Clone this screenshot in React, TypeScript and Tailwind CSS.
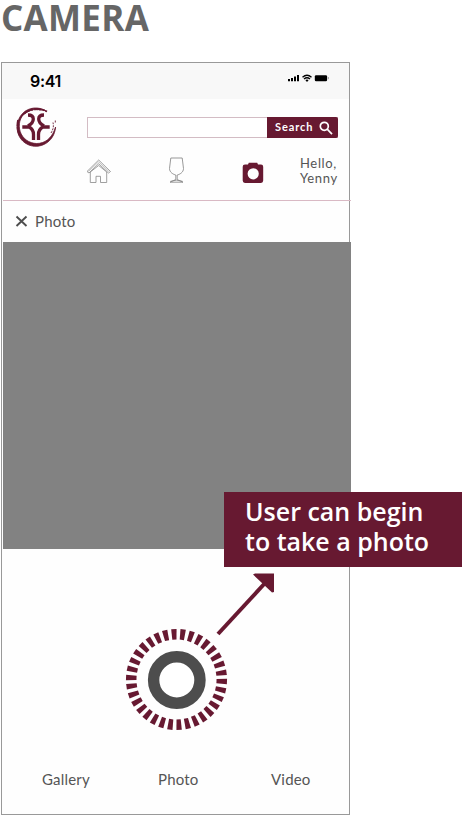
const WINE = '#671931';

function Logo() {
  return (
    <svg className="h-[42px] w-[42px]" viewBox="0 0 42 42" fill="none">
      <path d="M31.500 5.200C24 .2 13.500 1 7.500 7.500C1 14.500 .4 25 5.500 32.500C11 40 21 42.500 29.500 38.200C36 35 40 28.500 40.600 21C37.800 30 32.500 36 24.500 37.300C17 38.500 9.500 34.500 6.200 28C3 21.500 3.800 13.500 8.600 8.600C14.500 2.500 24 2 31.500 5.200Z" fill={WINE} stroke={WINE} strokeWidth=".8" />
      <path d="M9 8C15 2 25 1.500 32 5.500" stroke={WINE} strokeWidth="1.700" strokeDasharray="7 .6 3 .8" />
      <path d="M6 10.500C12 4 21 2.500 27 4.500" stroke={WINE} strokeWidth="1" strokeDasharray="4 .5 2 1" />
      <path d="M36 27C38.500 23 38.800 20 38 16.500M40.300 14.500v3" stroke={WINE} strokeWidth=".9" strokeDasharray="2 1.100" />
      <path d="M3 14C1.800 19 2.500 25 4.500 29" stroke={WINE} strokeWidth="1.700" strokeDasharray="6 .5 3 .5" />
      <path d="M13 9C16.500 9 18.300 10.500 18.300 13C18.300 16 16.500 18 13 20M29 9C25.500 9 23.700 10.500 23.700 13C23.700 16 25.500 18 29 20" stroke={WINE} strokeWidth="3.300" />
      <path d="M7.300 21H14C17 22.500 18.500 25 18.500 28.500V34M34.700 21H28C25 22.500 23.500 25 23.500 28.500V34" stroke={WINE} strokeWidth="3.300" />
    </svg>
  );
}

function StatusIcons() {
  return (
    <svg className="h-[10px] w-[42px]" viewBox="0 0 42 10">
      <path d="M0 6h2v2.300H0zM3 5h2v3.300H3zM6 3.500h2v4.800H6zM9 2h2v6.300H9z" />
      <path d="M14.500 4.200Q19 .4 23.500 4.200M16 6Q19 3.500 22 6" fill="none" stroke="#000" strokeWidth="1.400" />
      <path d="m17.300 7.100 1.700 1.800 1.700-1.800Q19 5.900 17.300 7.100Z" />
      <rect x="26.800" y="2.300" width="12.300" height="6" rx="1.300" />
      <path d="M40.300 4v2.200" stroke="#777" strokeWidth=".7" />
    </svg>
  );
}

function House() {
  return (
    <svg className="h-[25px] w-[26px]" viewBox="0 0 26 25" fill="none" stroke="#888" strokeWidth=".8" strokeLinejoin="round">
      <path d="M0 12.500 11.700 1 23.500 12.500 21.500 14 11.700 4.700 2 14Z" />
      <path d="M3.300 13V23.500H9V17.300H13.500V23.500H19.700V13M3.300 13 11.700 6.500 19.700 13" />
      <path d="m1.500 12.500 10.200-9.700 10.100 9.700" strokeWidth=".5" />
    </svg>
  );
}

function Glass() {
  return (
    <svg className="h-[27px] w-[17px]" viewBox="0 0 17 27" fill="none" stroke="#888" strokeWidth=".85">
      <path d="M2.800 1H14.200L15.500 11.500C15.500 15.500 11.500 17.500 9.200 18V22.500L15 25.200H2L7.800 22.500V18C5.500 17.500 1.500 15.500 1.500 11.500Z" />
      <path d="M2.500 24.300Q8.500 22 14.500 24.300" />
    </svg>
  );
}

function Camera() {
  return (
    <svg className="h-[22px] w-[22px]" viewBox="0 0 22 22">
      <path fillRule="evenodd" fill={WINE} d="M3 2.500H6L6.800 .8H15.200L16 2.500H19Q21.200 2.500 21.200 4.700V18.600Q21.200 21 19 21H3Q.7 21 .7 18.600V4.700Q.7 2.500 3 2.500ZM11.200 6.200A5.600 5.600 0 1 0 11.200 17.400A5.600 5.600 0 1 0 11.200 6.200Z" />
    </svg>
  );
}

function Shutter() {
  const ticks = Array.from({ length: 34 }, (_, i) => i);
  return (
    <svg className="h-[104px] w-[104px]" viewBox="-52.500 -51.500 104 104">
      {ticks.map((i) => (
        <path key={i} d="M-2.700-50.500H2.700L2.100-40H-2.100Z" fill={WINE} transform={`rotate(${-3 + (i * 360) / 34})`} />
      ))}
      <circle cx=".3" cy=".5" r="23.200" fill="#fff" stroke="#4d4d4d" strokeWidth="11.400" />
    </svg>
  );
}

export default function App() {
  return (
    <main className="relative h-[816px] w-[463px] overflow-hidden bg-white font-['Lato',sans-serif] text-[#555]">
      <h1 className="h-[62px] pl-px font-['Open_Sans',sans-serif] text-[35px] leading-[36px] font-bold tracking-[0.3px] text-[#666]">CAMERA</h1>
      <section className="ml-px flex h-[753px] w-[349px] flex-col border border-[#999] bg-[#fefefe]">
        <div className="flex h-[36px] shrink-0 justify-between bg-[#f8f8f8] pr-[19px] pl-[28px]">
          <span className="pt-[8px] font-['Inter',sans-serif] text-[16px] leading-[20px] font-semibold tracking-[-0.3px] text-black">9:41</span>
          <div className="pt-[10px]"><StatusIcons /></div>
        </div>
        <header className="-mr-[2px] ml-px flex h-[102px] shrink-0 border-b border-[#d9b9c4] pl-[12px]">
          <div className="w-[72px] pt-[7px]"><Logo /></div>
          <div className="w-[251px]">
            <div className="mt-[18px] flex h-[21px] border border-[#d3bcc4]">
              <div className="flex-1 bg-white" />
              <button className="-m-px flex w-[71px] items-center rounded-r-[2px] bg-[#671931] pl-[8px] text-[11px] font-bold tracking-[0.9px] text-white">
                Search
                <svg className="ml-[6px] h-[14px] w-[14px]" viewBox="0 0 14 14" fill="none" stroke="white" strokeWidth="1.700">
                  <circle cx="5.300" cy="5.300" r="4" /><path d="m8.200 8.200 4.800 5" />
                </svg>
              </button>
            </div>
            <nav className="flex">
              <div className="w-[80px] pt-[21px]"><House /></div>
              <div className="w-[75px] pt-[19px] pl-px"><Glass /></div>
              <div className="w-[58px] pt-[24px]"><Camera /></div>
              <p className="pt-[18px] text-[13px] leading-[14.500px] tracking-[0.65px] whitespace-nowrap">Hello,<br />Yenny</p>
            </nav>
          </div>
        </header>
        <div className="flex h-[41px] shrink-0 items-center pb-px pl-[13px]">
          <svg className="h-[13px] w-[13px]" viewBox="0 0 13 13" stroke="#4d4d4d" strokeWidth="1.900"><path d="m1.500 1.500 10 9.500M11.500 1.500l-10 9.500" /></svg>
          <span className="ml-[7px] text-[15px] tracking-[0.2px]">Photo</span>
        </div>
        <div className="-mr-[2px] ml-px h-[307px] shrink-0 bg-[#828282]" />
        <div className="flex justify-center pt-[79px]"><Shutter /></div>
        <nav className="mt-[37px] flex text-[15px] leading-[20px] tracking-[0.2px]">
          <span className="ml-[40px] w-[116px]">Gallery</span>
          <span className="w-[113px]">Photo</span>
          <span>Video</span>
        </nav>
      </section>
      <svg className="absolute top-[568px] left-[210px] h-[72px] w-[70px]" viewBox="0 0 70 72">
        <path d="M8 66 56 14" stroke={WINE} strokeWidth="4" />
        <path d="M43 6.500 45 5.500H64V24L62 24.500Z" fill={WINE} />
      </svg>
      <div className="absolute top-[492px] left-[224px] h-[75px] w-[238px] bg-[#671931] pt-[4px] pl-[21px] font-['Open_Sans',sans-serif] text-[25px] leading-[30px] font-semibold whitespace-nowrap text-white">
        User can begin<br />to take a photo
      </div>
    </main>
  );
}
